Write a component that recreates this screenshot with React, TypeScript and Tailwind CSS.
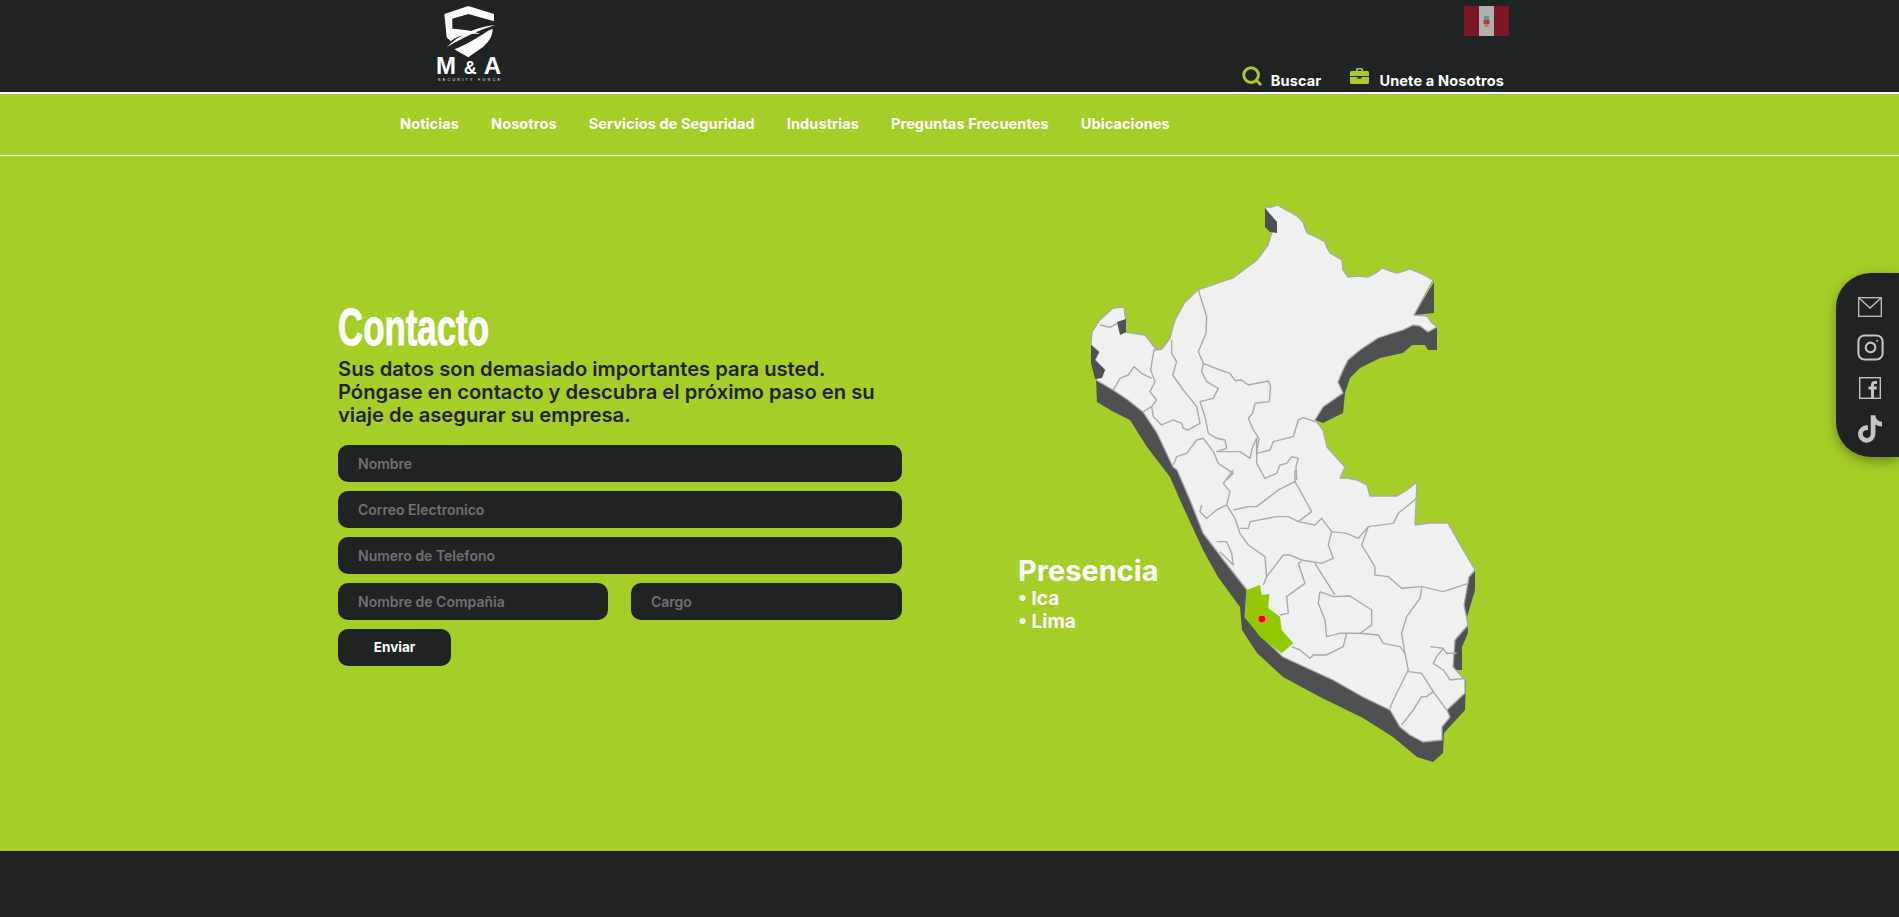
import { Search, Instagram } from 'lucide-react'
import { FaTiktok } from 'react-icons/fa'

const navLinks = ['Noticias', 'Nosotros', 'Servicios de Seguridad', 'Industrias', 'Preguntas Frecuentes', 'Ubicaciones']

// page coordinates, the svg viewBox starts at 1000,190
const land =
  '1265,207 1272,207 1278,205 1284,209 1290,212 1297,216 1303,222 1305,228 1307,233 1316,237 1325,242 1327,248 1330,253 1342,260 1343,270 1348,277 1358,276 1368,277 1376,273 1382,268 1390,271 1397,273 1404,271 1410,269 1422,274 1433,280 1414,315 1427,316 1431,322 1437,327 1428,332 1420,326 1413,325 1403,330 1393,333 1378,338 1360,350 1348,360 1343,370 1338,382 1343,393 1323,407 1315,420 1323,430 1327,447 1335,456 1345,467 1340,478 1347,478 1357,480 1367,485 1370,496 1397,496 1407,490 1417,482 1415,525 1430,523 1448,523 1462,548 1475,570 1469,577 1464,605 1468,625 1455,640 1453,667 1465,680 1465,693 1447,710 1450,717 1442,727 1442,740 1423,742 1410,735 1400,727 1390,710 1363,697 1333,680 1283,657 1262,637 1245,617 1247,590 1225,562 1203,533 1190,500 1177,470 1173,467 1157,433 1143,412 1128,400 1113,390 1096,380 1105,370 1095,360 1099,352 1091,345 1092,332 1100,320 1113,308 1124,307 1126,322 1125,332 1145,335 1155,348 1162,349 1170,338 1175,320 1185,302 1198,290 1233,278 1257,260 1268,245 1272,232'

const coastShadow =
  '1096,380 1097,402 1112,411 1130,420 1147,447 1170,477 1180,500 1203,550 1218,577 1240,607 1242,630 1257,653 1283,677 1320,697 1363,718 1393,737 1417,757 1433,762 1443,753 1444,733 1465,710 1466,680 1400,680 1300,620 1230,540 1180,450 1150,380 1110,360'

const eastShadow =
  '1437,327 1437,350 1428,350 1425,345 1412,345 1403,353 1380,358 1360,368 1350,378 1345,393 1343,413 1323,423 1315,420 1300,350 1400,300'

const smallShadows = [
  '1434,282 1434,313 1414,315',
  '1475,570 1475,590 1467,617 1468,633 1462,647 1462,670 1440,670 1440,600',
  '1265,208 1277,222 1277,233 1270,232 1265,227',
  '1091,345 1099,352 1095,360 1105,370 1102,378 1095,379 1091,363',
  '1117,322 1126,319 1126,332 1120,335',
]

// traced from the north half, 3x coordinates with origin 1060,190
const northLines = [
  'M415 300 440 380 438 430 415 485 430 520 425 545 440 575 475 595 460 625 420 635 435 680 445 730 470 745 495 750 500 775 470 785 540 785 570 805 578 770 590 745 590 790',
  'M430 520 480 540 510 550 525 572 545 570 565 585 625 573 632 590 628 635 585 640 578 670 565 685 580 720 597 745 590 790 630 780 640 755 700 740 715 690 730 683 765 695',
  'M335 450 335 490 350 515 338 555 370 600 410 650 420 700 385 720 370 715 365 700 340 690 305 705 280 680 275 650 290 630 270 605 285 575 272 540 282 480 305 478',
  'M275 565 245 550 222 530 205 555 180 565 160 600',
  'M120 405 150 412 172 400',
  'M250 665 275 650',
  'M340 825 350 800 380 790 410 750 430 745 460 785 475 820 520 850 500 870',
  'M590 790 590 820 615 865 650 850 660 825 680 820 695 800 715 805 708 830 710 870',
]

// same for the south half, origin 1000,470
const southLines = [
  'M700 0 670 40 690 65 680 105 650 120 620 145 600 125 605 105',
  'M680 105 705 145 720 190 745 225 795 260 800 320 790 345',
  'M700 120 745 110 770 110 835 60 885 35 905 70 935 125 895 155 865 140 830 140 750 155 745 175 720 175',
  'M885 35 885 0',
  'M895 155 945 165 965 145 995 185 985 225 1000 265 965 280 905 270 870 255 850 255 800 320',
  'M995 185 1040 190 1075 205 1105 170 1180 160 1195 130 1250 85',
  'M1105 170 1085 225 1125 290 1125 315 1165 320 1205 355 1265 350 1330 365 1405 340',
  'M1265 355 1260 385 1220 440 1205 490 1215 550 1225 600 1180 690 1170 715',
  'M945 280 970 320 1005 375',
  'M905 275 895 280 915 340 860 380 865 430 840 435',
  'M960 365 1000 380 1050 378 1115 420 1115 465 1080 490 1020 490 980 500 975 450 955 400 960 365',
  'M1080 490 1135 495 1150 520 1200 530 1215 550',
  'M1040 490 1030 530 980 555 940 555 930 565 900 540 875 530',
  'M1225 605 1265 610 1300 665 1340 720',
  'M1300 665 1280 680 1265 680 1240 720 1205 765',
  'M1290 530 1330 535 1340 550 1370 550',
  'M1330 535 1310 560 1300 580 1330 600 1350 630 1395 625',
  'M650 215 680 215 695 250 700 285 660 245',
]

function PeruMap() {
  return (
    <svg viewBox="1000 190 500 590" className="h-[590px] w-[500px]">
      <polygon points={coastShadow} fill="#4f5052" />
      <polygon points={eastShadow} fill="#4f5052" />
      {smallShadows.slice(0, 2).map((p) => (
        <polygon key={p} points={p} fill="#4f5052" />
      ))}
      <polygon points={land} fill="#eff0f0" stroke="#a8aaa8" strokeWidth="1.3" strokeLinejoin="round" />
      {smallShadows.slice(2).map((p) => (
        <polygon key={p} points={p} fill="#4f5052" />
      ))}
      <g transform="translate(1060 190) scale(0.3333)" fill="none" stroke="#a9abab" strokeWidth="4.2" strokeLinejoin="round">
        {northLines.map((d) => (
          <path key={d} d={d} />
        ))}
      </g>
      <g transform="translate(1000 470) scale(0.3333)">
        <g fill="none" stroke="#a9abab" strokeWidth="4.2" strokeLinejoin="round">
          {southLines.map((d) => (
            <path key={d} d={d} />
          ))}
        </g>
        {/* Ica */}
        <polygon
          points="740,360 780,345 785,375 808,372 805,415 840,440 845,480 880,520 845,550 780,500 735,440"
          fill="#8fca00"
        />
        <circle cx="786" cy="447" r="15" fill="#f08a50" opacity="0.8" />
        <circle cx="786" cy="447" r="10" fill="#f00010" />
      </g>
    </svg>
  )
}

function Logo() {
  return (
    <svg viewBox="0 0 72 84" className="h-[84px] w-[72px]">
      <g transform="translate(-31 0) scale(0.3333)" fill="#ffffff">
        <path d="M133 42 205 18 282 42 282 64 205 42 157 56 157 86C190 88 225 93 240 102 205 98 172 106 152 124L140 112Z" />
        <path d="M140 142C175 105 230 80 286 75 245 88 195 108 140 142Z" />
        <path d="M163 148C195 136 230 116 262 94L278 86C278 110 265 125 250 140L205 172Z" />
      </g>
      <text x="5" y="74" fill="#ffffff" fontFamily="'Liberation Sans', sans-serif" fontWeight="700" fontSize="24" textLength="65">
        M <tspan fontSize="18">&amp;</tspan> A
      </text>
      <text x="7" y="80.5" fill="#ffffff" fontFamily="'Liberation Sans', sans-serif" fontSize="3.6" textLength="62">
        SECURITY FORCE
      </text>
    </svg>
  )
}

function PeruFlag() {
  return (
    <svg viewBox="0 0 45 30" className="mr-[-5px] mt-[6px] h-[30px] w-[45px]">
      <rect width="45" height="30" fill="#7b1622" />
      <rect x="15" width="15" height="30" fill="#b0b0b0" />
      <rect x="20" y="10" width="5" height="4" fill="#5f9a94" />
      <rect x="19.5" y="14" width="6" height="4" fill="#a8423c" />
      <rect x="20.5" y="18" width="4" height="3" fill="#b8862c" />
    </svg>
  )
}

function Briefcase() {
  return (
    <svg viewBox="0 0 19 16" className="mb-[8px] ml-[29px] mr-[10px] h-[16px] w-[19px]" fill="#a6ce29">
      <path d="M6 3V1.500C6 .7 6.700 0 7.500 0h4C12.300 0 13 .7 13 1.500V3h-1.500V1.500h-4V3Z" />
      <path d="M1.500 3h16c.8 0 1.500.7 1.500 1.500V8H0V4.500C0 3.700.7 3 1.500 3Z" />
      <path d="M0 9h7.500v1.500h4V9H19v5.500c0 .8-.7 1.500-1.500 1.500h-16C.7 16 0 15.300 0 14.500Z" />
    </svg>
  )
}

function Field({ placeholder, className }: { placeholder: string; className: string }) {
  return (
    <input
      placeholder={placeholder}
      className={`h-[37px] rounded-[10px] bg-[#1f2324] px-5 font-['Inter',sans-serif] text-[14px] font-semibold text-white outline-none placeholder:text-[#6f7274] ${className}`}
    />
  )
}

export default function App() {
  return (
    <div className="relative h-[917px] overflow-hidden bg-[#1f2324] font-['Inter',sans-serif]">
      {/* Top bar */}
      <header className="flex h-[92px] items-start justify-between pl-[431px] pr-[395px]">
        <Logo />
        <div className="flex h-full flex-col items-end">
          <PeruFlag />
          <div className="mt-[29px] flex items-end text-[14.5px] font-bold tracking-[0.15px] text-white">
            <Search className="mb-[5px] mr-[8px] h-[22px] w-[22px] text-[#a6ce29]" strokeWidth={3.2} />
            <span>Buscar</span>
            <Briefcase />
            <span>Unete a Nosotros</span>
          </div>
        </div>
      </header>

      <div className="h-[2px] bg-white" />

      <main className="bg-[#a6ce29]">
        {/* Nav */}
        <nav className="flex h-[62px] items-center gap-[32px] border-b border-white pb-[1px] pl-[400px] text-[14.5px] font-bold tracking-[0.1px] text-white">
          {navLinks.map((l) => (
            <a key={l} href="#">
              {l}
            </a>
          ))}
        </nav>

        {/* Contact + map */}
        <section className="flex h-[695px] pl-[338px]">
          <div className="w-[564px] pt-[141px]">
            <h1 className="origin-left scale-x-[0.67] font-['Liberation_Sans',sans-serif] text-[52px] leading-[60px] font-bold text-white [-webkit-text-stroke:1px_white]">
              Contacto
            </h1>
            <p className="w-[564px] text-[20.2px] leading-[23px] font-semibold text-[#1f2324]">
              Sus datos son demasiado importantes para usted.
              <br />
              Póngase en contacto y descubra el próximo paso en su
              <br />
              viaje de asegurar su empresa.
            </p>
            <form className="mt-[19px] flex flex-wrap gap-y-[9px]">
              <Field placeholder="Nombre" className="w-full" />
              <Field placeholder="Correo Electronico" className="w-full" />
              <Field placeholder="Numero de Telefono" className="w-full" />
              <div className="flex w-full gap-[23px]">
                <Field placeholder="Nombre de Compañia" className="w-[270px]" />
                <Field placeholder="Cargo" className="w-[271px]" />
              </div>
              <button type="button" className="h-[37px] w-[113px] rounded-[10px] bg-[#1f2324] text-[13.5px] font-bold text-white">
                Enviar
              </button>
            </form>
          </div>

          <div className="relative ml-[98px] pt-[34px]">
            <PeruMap />
            <div className="absolute left-[18px] top-[398px] text-white">
              <h2 className="text-[29px] leading-[33px] font-bold">Presencia</h2>
              <ul className="text-[19px] leading-[23px] font-bold">
                <li>• Ica</li>
                <li>• Lima</li>
              </ul>
            </div>
          </div>
        </section>
      </main>

      <footer className="h-[66px] bg-[#1f2324]" />

      {/* Floating social panel */}
      <aside className="absolute right-0 top-[273px] flex h-[184px] w-[63px] flex-col items-start rounded-l-[35px] bg-[#1f2324] pl-[22px] pt-[24px] text-[#c4c4c4] shadow-[0_4px_12px_rgba(0,0,0,0.35)]">
        <svg viewBox="0 0 24 20" className="h-[20px] w-[24px]" fill="none" stroke="currentColor" strokeWidth="1.3">
          <rect x="0.7" y="0.7" width="22.600" height="18.600" />
          <path d="M1 1 12 11 23 1" />
        </svg>
        <Instagram className="-ml-[2px] mt-[16px] h-[29px] w-[29px]" strokeWidth={1.7} />
        <svg viewBox="0 0 22 22" className="ml-[1px] mt-[15px] h-[22px] w-[22px]" fill="none" stroke="currentColor">
          <rect x="0.7" y="0.7" width="20.600" height="20.600" strokeWidth="1.400" />
          <path d="M12 21.500V12.500H9.500V9.500H12V7.500C12 5.200 13.400 4 15.400 4H18V7H16.200C15.300 7 15 7.500 15 8.200V9.500H18L17.500 12.500H15V21.500Z" fill="currentColor" stroke="none" />
        </svg>
        <FaTiktok className="mt-[16px] h-[28px] w-[24px]" />
      </aside>
    </div>
  )
}
